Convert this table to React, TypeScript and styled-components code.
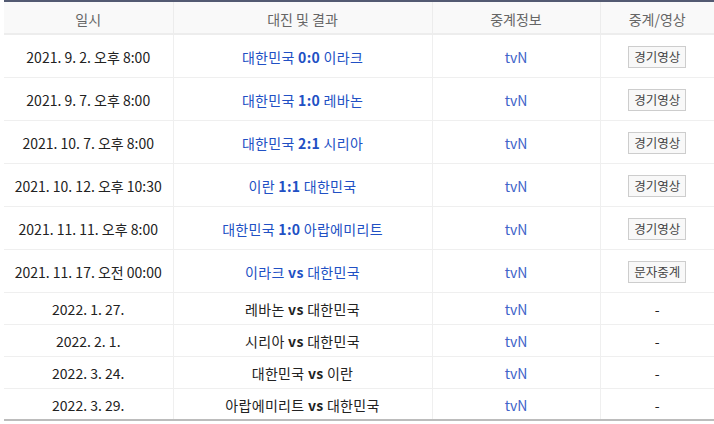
import React from "react";
import styled, { createGlobalStyle } from "styled-components";

const Global = createGlobalStyle`
  html, body { margin: 0; padding: 0; background: #fff; }
  body { font-family: "Noto Sans CJK KR", "Noto Sans", sans-serif; }
`;

const Wrap = styled.div`
  padding-left: 4px;
`;

const Table = styled.table`
  width: 710px;
  border-collapse: collapse;
  border-top: 2px solid #535a72;
  border-bottom: 2px solid #bcbcbc;
  table-layout: fixed;
  font-size: 14px;
`;

const Th = styled.th`
  height: 28px;
  padding: 3px 0 0;
  background: #f9f9f9;
  color: #666;
  font-weight: 400;
  font-size: 14px;
  line-height: 16px;
  text-align: center;
  border-bottom: 2px solid #ededed;
  border-left: 1px solid #ececec;
  &:first-child { border-left: none; }
`;

const Tr = styled.tr<{ $tall?: boolean }>`
  height: ${(p) => (p.$tall ? "43px" : "32px")};
  border-bottom: 1px solid #efefef;
  &:last-child { border-bottom: none; }
`;

const Td = styled.td<{ $tone?: "date" | "match" | "plain" | "tv" }>`
  padding: 2px 0 0;
  text-align: center;
  line-height: 16px;
  letter-spacing: ${(p) => (p.$tone === "match" || p.$tone === "plain" ? "0.3px" : "0")};
  border-left: 1px solid #efefef;
  &:first-child { border-left: none; }
  color: ${(p) =>
    p.$tone === "match"
      ? "#2150c4"
      : p.$tone === "tv"
      ? "#4163c9"
      : "#222"};
`;

const Score = styled.b`
  font-weight: 700;
`;

const Btn = styled.button`
  height: 22px;
  padding: 0 5px;
  border: 1px solid #cdcdcd;
  background: #f8f8f8;
  color: #444;
  font-family: inherit;
  font-size: 12.5px;
  letter-spacing: 0;
  line-height: 18px;
  cursor: pointer;
`;

type Row = {
  date: string;
  home: string;
  score: string;
  away: string;
  done: boolean;
  action?: string;
};

const rows: Row[] = [
  { date: "2021. 9. 2. 오후 8:00", home: "대한민국", score: "0:0", away: "이라크", done: true, action: "경기영상" },
  { date: "2021. 9. 7. 오후 8:00", home: "대한민국", score: "1:0", away: "레바논", done: true, action: "경기영상" },
  { date: "2021. 10. 7. 오후 8:00", home: "대한민국", score: "2:1", away: "시리아", done: true, action: "경기영상" },
  { date: "2021. 10. 12. 오후 10:30", home: "이란", score: "1:1", away: "대한민국", done: true, action: "경기영상" },
  { date: "2021. 11. 11. 오후 8:00", home: "대한민국", score: "1:0", away: "아랍에미리트", done: true, action: "경기영상" },
  { date: "2021. 11. 17. 오전 00:00", home: "이라크", score: "vs", away: "대한민국", done: true, action: "문자중계" },
  { date: "2022. 1. 27.", home: "레바논", score: "vs", away: "대한민국", done: false },
  { date: "2022. 2. 1.", home: "시리아", score: "vs", away: "대한민국", done: false },
  { date: "2022. 3. 24.", home: "대한민국", score: "vs", away: "이란", done: false },
  { date: "2022. 3. 29.", home: "아랍에미리트", score: "vs", away: "대한민국", done: false },
];

export default function App() {
  return (
    <>
      <Global />
      <Wrap>
        <Table>
          <colgroup>
            <col style={{ width: 169 }} />
            <col style={{ width: 259 }} />
            <col style={{ width: 168 }} />
            <col style={{ width: 114 }} />
          </colgroup>
          <thead>
            <tr>
              <Th>일시</Th>
              <Th>대진 및 결과</Th>
              <Th>중계정보</Th>
              <Th>중계/영상</Th>
            </tr>
          </thead>
          <tbody>
            {rows.map((r, i) => (
              <Tr key={i} $tall={!!r.action}>
                <Td $tone="date">{r.date}</Td>
                <Td $tone={r.done ? "match" : "plain"}>
                  {r.home} <Score>{r.score}</Score> {r.away}
                </Td>
                <Td $tone="tv">tvN</Td>
                <Td $tone="plain">{r.action ? <Btn>{r.action}</Btn> : "-"}</Td>
              </Tr>
            ))}
          </tbody>
        </Table>
      </Wrap>
    </>
  );
}
